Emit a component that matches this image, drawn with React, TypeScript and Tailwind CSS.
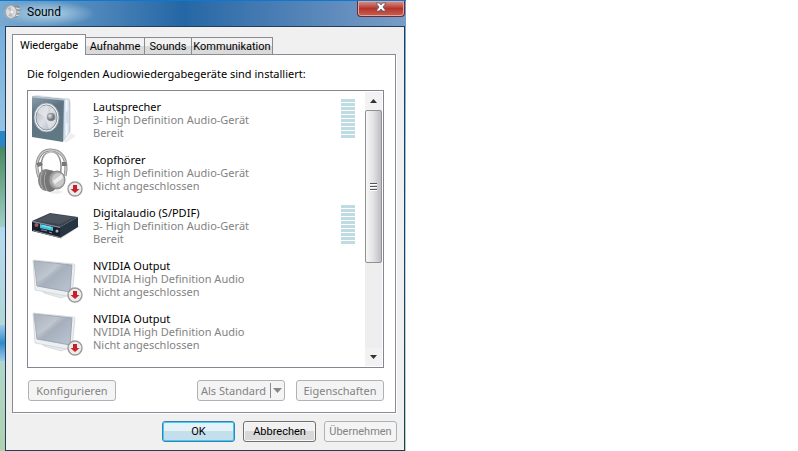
import { useState } from 'react';
import clsx from 'clsx';

type Device = {
  id: number;
  name: string;
  driver: string;
  connected: boolean;
  icon: 'speaker' | 'headphones' | 'receiver' | 'monitor';
};

const devices: Device[] = [
  { id: 1, name: 'Lautsprecher', driver: '3- High Definition Audio-Gerät', connected: true, icon: 'speaker' },
  { id: 2, name: 'Kopfhörer', driver: '3- High Definition Audio-Gerät', connected: false, icon: 'headphones' },
  { id: 3, name: 'Digitalaudio (S/PDIF)', driver: '3- High Definition Audio-Gerät', connected: true, icon: 'receiver' },
  { id: 4, name: 'NVIDIA Output', driver: 'NVIDIA High Definition Audio', connected: false, icon: 'monitor' },
  { id: 5, name: 'NVIDIA Output', driver: 'NVIDIA High Definition Audio', connected: false, icon: 'monitor' },
];

const tabs = [
  { label: 'Wiedergabe', width: 'w-[74px]' },
  { label: 'Aufnahme', width: 'w-[60px]' },
  { label: 'Sounds', width: 'w-[48px]' },
  { label: 'Kommunikation', width: 'w-[82px]' },
];

function Gradients() {
  return (
    <svg className="absolute size-0" aria-hidden="true">
      <defs>
        <linearGradient id="front" x1="0" y1="0" x2="0.3" y2="1">
          <stop offset="0" stopColor="#8fa0ae" />
          <stop offset="0.4" stopColor="#5e7382" />
          <stop offset="1" stopColor="#607784" />
        </linearGradient>
        <linearGradient id="side" x1="0" y1="0" x2="1" y2="0">
          <stop offset="0" stopColor="#b4c6d8" />
          <stop offset="0.5" stopColor="#f1f6fa" />
          <stop offset="1" stopColor="#c6d2de" />
        </linearGradient>
        <linearGradient id="cone" x1="0" y1="0" x2="1" y2="1">
          <stop offset="0" stopColor="#a9b0b8" />
          <stop offset="0.5" stopColor="#dde0e5" />
          <stop offset="1" stopColor="#a8adb5" />
        </linearGradient>
        <radialGradient id="dome" cx="0.35" cy="0.35">
          <stop offset="0" stopColor="#e3e6ea" />
          <stop offset="1" stopColor="#70767e" />
        </radialGradient>
        <linearGradient id="band" x1="0" y1="0" x2="1" y2="0">
          <stop offset="0" stopColor="#8f8f8f" />
          <stop offset="0.5" stopColor="#c3c3c3" />
          <stop offset="1" stopColor="#858585" />
        </linearGradient>
        <linearGradient id="screen" x1="0" y1="0" x2="1" y2="1">
          <stop offset="0" stopColor="#9ba4af" />
          <stop offset="0.4" stopColor="#b8bfc9" />
          <stop offset="0.5" stopColor="#a6afbc" />
          <stop offset="1" stopColor="#bcc6d2" />
        </linearGradient>
      </defs>
    </svg>
  );
}

function SpeakerIcon() {
  return (
    <svg viewBox="0 0 48 50" className="h-[50px] w-12">
      <path d="M31 47 39 38 44 41 35 47z" fill="#eeeeee" />
      <path d="M0 1 5 0 37 4 32 5z" fill="#dce4ea" />
      <path d="M32 4 37 4 38 7 38 37 31 46z" fill="url(#side)" stroke="#a9b9c9" strokeWidth="0.6" />
      <path d="M34 17q3-3 3 3v5q-1 5-3 3z" fill="#d5dfe9" />
      <path d="M0 1 32 4 31 47 0 42z" fill="url(#front)" />
      <path d="M0 1 32 4 32 5.500 0 2.500z" fill="#b7c3cd" />
      <ellipse cx="14.500" cy="22.500" rx="12.500" ry="14.500" fill="#eff1f3" stroke="#8b98a3" strokeWidth="0.8" />
      <ellipse cx="14.500" cy="22.500" rx="10.500" ry="12.500" fill="url(#cone)" stroke="#9096a0" />
      <path d="M14 23 5 17Q9 9 17 11zM14 24 17 34Q23 31 24 25z" fill="#eceef1" opacity="0.6" />
      <circle cx="19" cy="22" r="4" fill="url(#dome)" stroke="#8e959d" strokeWidth="0.500" />
    </svg>
  );
}

function HeadphonesIcon() {
  return (
    <svg viewBox="0 0 48 50" className="h-[50px] w-12">
      <path d="M7 29C1 13 9 2 18 2 28 2 37 9 33 28" fill="none" stroke="#858585" strokeWidth="3" />
      <path d="M7 29C1 13 9 2 18 2 28 2 37 9 33 28" fill="none" stroke="#c9c9c9" strokeWidth="1.500" />
      <path d="M11 27C7 12 11 4 20 4 27 4 31 14 28 28" fill="none" stroke="url(#band)" strokeWidth="1.500" />
      <path d="M4 15 9 14 11 17 6 19zM30 14 34 14 35 18 30 18z" fill="#777" />
      <ellipse cx="14" cy="32" rx="8" ry="11" fill="#858585" />
      <ellipse cx="18" cy="33" rx="8" ry="11" fill="#767676" />
      <path d="M10 24Q6 33 11 41M14 24Q10 33 15 43" fill="none" stroke="#a9a9a9" />
      <ellipse cx="25" cy="32" rx="8" ry="9" fill="#a4a4a4" stroke="#858585" />
      <ellipse cx="26" cy="32" rx="6" ry="7" fill="#c9c9c9" />
      <path d="M21 33 30 26 31 30 23 36z" fill="#eee" />
      <path d="M17 45 26 42 32 44 25 46z" fill="#ededed" />
    </svg>
  );
}

function ReceiverIcon() {
  return (
    <svg viewBox="0 0 48 50" className="h-[50px] w-12">
      <path d="M27 37 45 24 48 25 29 38z" fill="#dfe1e3" />
      <path d="M0 20 18 12 46 16 28 26z" fill="#3c444f" />
      <path d="M4 20 18 13 42 16 28 23z" fill="#59636f" opacity="0.5" />
      <path d="M0 20 28 26 28 37 0 30z" fill="#19202b" />
      <path d="M28 26 46 16 46 26 28 37z" fill="#273442" />
      <path d="M0 20 28 26 28 27 0 21z" fill="#8c98a5" />
      <path d="M8 23 21 26 21 30 8 27z" fill="#43c4dc" />
      <path d="M10 24 19 26 19 27 10 25z" fill="#8ee9f3" />
      <path d="M1 29 28 36 28 37 1 30z" fill="#8794a0" />
      <circle cx="4.500" cy="24" r="2" fill="#ab545f" />
      <circle cx="25" cy="30" r="1.500" fill="#a8b2bb" />
      <path d="M9 29h2l4 1M17 31l3 1" stroke="#89949f" fill="none" />
    </svg>
  );
}

function MonitorIcon() {
  return (
    <svg viewBox="0 0 48 50" className="h-[50px] w-12">
      <path d="M9 36 30 38 37 41 29 44 12 39z" fill="#e7eaed" stroke="#c3c9ce" strokeWidth="0.500" />
      <path d="M1 6 42 10 43 11 40 43 3 36z" fill="#edf0f2" stroke="#c4c9cd" strokeWidth="0.600" />
      <path d="M2 7 40 11 38 38 5 32z" fill="url(#screen)" stroke="#929ca8" strokeWidth="0.800" />
      <path d="M2 7 27 10Q17 23 4 28z" fill="#e0e4e9" opacity="0.2" />
    </svg>
  );
}

const icons = {
  speaker: SpeakerIcon,
  headphones: HeadphonesIcon,
  receiver: ReceiverIcon,
  monitor: MonitorIcon,
};

function UnpluggedBadge() {
  return (
    <svg viewBox="0 0 16 16" className="absolute right-0 bottom-0.5 size-4">
      <circle cx="8" cy="8" r="7" fill="#ececec" stroke="#9b9b9b" strokeWidth="1.400" />
      <path d="M6 4h4v4h2.500L8 12 3.500 8H6z" fill="#c8202b" />
    </svg>
  );
}

function LevelMeter() {
  return (
    <div className="mt-1 flex w-3.5 flex-col gap-px">
      {Array.from({ length: 10 }, (_, i) => (
        <span key={i} className="h-[3px] bg-[#bfdce2]" />
      ))}
    </div>
  );
}

function DeviceRow({ device }: { device: Device }) {
  const Icon = icons[device.icon];
  return (
    <li className="flex h-[53px] pr-[10px] pl-1">
      <div className="relative mr-[10px] h-[51px] w-[51px] shrink-0">
        <Icon />
        {!device.connected && <UnpluggedBadge />}
      </div>
      <div className="min-w-0 flex-1 pt-[5px] leading-[13px]">
        <p className="text-black">{device.name}</p>
        <p className="text-[#838383]">{device.driver}</p>
        <p className="text-[#838383]">{device.connected ? 'Bereit' : 'Nicht angeschlossen'}</p>
      </div>
      {device.connected && <LevelMeter />}
    </li>
  );
}

function Scrollbar() {
  return (
    <div className="flex w-[17px] flex-col bg-[#eeeeee]" aria-hidden="true">
      <div className="flex h-[18px] items-center justify-center bg-[#f2f2f2]">
        <svg viewBox="0 0 7 4" className="h-1 w-[7px]"><path d="M0 4 3.500 0 7 4z" fill="#333" /></svg>
      </div>
      <div className="flex h-[153px] items-center justify-center rounded-xs border border-[#929292] bg-linear-to-r from-[#f7f7f7] via-[#e2e2e4] to-[#bdbdc4]">
        <div className="flex w-[7px] flex-col gap-px">
          <span className="h-0.5 border-b border-white bg-[#555]" />
          <span className="h-0.5 border-b border-white bg-[#555]" />
          <span className="h-0.5 border-b border-white bg-[#555]" />
        </div>
      </div>
      <div className="flex-1" />
      <div className="flex h-[18px] items-center justify-center bg-[#f2f2f2]">
        <svg viewBox="0 0 7 4" className="h-1 w-[7px]"><path d="M0 0 3.500 4 7 0z" fill="#333" /></svg>
      </div>
    </div>
  );
}

const disabledButton = 'h-[21px] rounded-[3px] border border-[#adb2b5] bg-[#f4f4f4] text-[#838383]';

export default function App() {
  const [activeTab, setActiveTab] = useState('Wiedergabe');

  return (
    <div className="min-h-screen bg-white font-['Noto_Sans',sans-serif] text-[11px] leading-[13px] text-black">
      <Gradients />
      <div className="w-full max-w-[406px] bg-linear-to-b from-[#6ba2cb] from-0% via-[#b1d6ee] via-60% to-[#aed2ad] pr-px pb-px">
        {/* Titelleiste */}
        <header className="-mr-px flex h-[26px] items-start border-t border-[#0c78cf] bg-linear-to-r from-[#78a9d0] from-0% via-[#2467a5] via-45% to-[#789dc7]">
          <div className="flex h-full w-24 items-center gap-1.5 bg-radial from-[#b4d3e6] to-transparent to-70% pb-[3px] pl-[5px]">
            <svg viewBox="0 0 16 16" className="size-4">
              <path d="M8 3 13 2 15 6 13 12 8 14z" fill="#9b9b9b" stroke="#777" strokeWidth="0.600" />
              <path d="M11 4 15 5M11 8 15 8M10 12 14 11" stroke="#e6e6e6" />
              <ellipse cx="6" cy="8" rx="5.500" ry="6.500" fill="#ddd" stroke="#aaa" />
              <path d="M6 8 2 4 6 3zM6 8 8 13 3 12z" fill="#bababa" />
              <circle cx="7" cy="8" r="2" fill="#f4f4f4" stroke="#aaa" strokeWidth="0.500" />
            </svg>
            <h1 className="font-['Roboto','Noto_Sans',sans-serif] text-xs">Sound</h1>
          </div>
          <button
            type="button"
            aria-label="Schließen"
            className="mr-px ml-auto flex h-4 w-12 items-center justify-center rounded-b-[4px] border border-t-0 border-[#692c34] bg-linear-to-b from-[#cf9590] from-0% via-[#b6332b] via-50% to-[#c86050] pb-1 shadow-[inset_0_0_0_1px_#dfa6a0]"
          >
            <svg viewBox="0 0 12 10" className="h-2.5 w-3">
              <path d="M1 1H4.500L6 3 7.500 1H11L8 5 11 9H7.500L6 7 4.500 9H1L4 5z" fill="#fff" stroke="#535666" strokeWidth="0.800" />
            </svg>
          </button>
        </header>

        <div className="flex">
          {/* Fensterrand */}
          <div className="w-[5px] shrink-0 bg-linear-to-b from-[#75aedb] via-[#b6d9ef] to-[#aed2ad]">
            <div className="mt-[105px] h-4 bg-[#2b86c5]" />
            <div className="h-20 bg-linear-to-b from-[#49895d] to-[#a0cfc6]" />
            <div className="mt-[98px] h-9 bg-linear-to-b from-[#9acae8] via-[#2d8ac9] to-[#9acae8]" />
          </div>

          <main className="min-w-0 flex-1 border border-[#243d59] bg-[#f0f0f0] pt-[7px] pr-[7px] pb-2 pl-1.5">
            <div role="tablist" className="flex items-end">
              {tabs.map((tab) => (
                <button
                  key={tab.label}
                  type="button"
                  role="tab"
                  aria-selected={activeTab === tab.label}
                  onClick={() => setActiveTab(tab.label)}
                  className={clsx(
                    "-mr-px border border-b-0 border-[#898c95] font-['Roboto','Noto_Sans',sans-serif] whitespace-nowrap",
                    tab.width,
                    activeTab === tab.label
                      ? 'relative -mb-px h-[21px] bg-white'
                      : 'h-[17px] bg-linear-to-b from-[#f2f2f2] from-50% to-[#dadada] to-50%',
                  )}
                >
                  {tab.label}
                </button>
              ))}
            </div>

            <section className="mr-px border border-[#898c95] bg-white pt-3 pr-[11px] pb-[11px] pl-3.5 shadow-[1px_1px_0_#fff]">
              <h2 className="mb-[10px]">Die folgenden Audiowiedergabegeräte sind installiert:</h2>

              <div className="flex h-[278px] border border-[#828790] bg-white py-px pr-px">
                <ul className="min-w-0 flex-1 overflow-hidden pt-[3px]">
                  {devices.map((device) => (
                    <DeviceRow key={device.id} device={device} />
                  ))}
                </ul>
                <Scrollbar />
              </div>

              <div className="mt-3 flex items-center pl-px">
                <button type="button" disabled className={clsx(disabledButton, 'w-[88px]')}>Konfigurieren</button>
                <button type="button" disabled className={clsx(disabledButton, 'mr-[11px] ml-auto flex w-[88px] items-center justify-between pr-0.5 pl-[3px] whitespace-nowrap')}>
                  Als Standard
                  <span className="flex h-[15px] items-center border-l border-[#898989] pl-0.5">
                    <svg viewBox="0 0 9 5" className="h-[5px] w-[9px]"><path d="M0 0h9L4.500 5z" fill="#898989" /></svg>
                  </span>
                </button>
                <button type="button" disabled className={clsx(disabledButton, 'w-[88px]')}>Eigenschaften</button>
              </div>
            </section>

            <footer className="mt-2 flex justify-end gap-2 font-['Roboto','Noto_Sans',sans-serif]">
              <button type="button" className="h-[21px] w-[73px] rounded-[3px] border border-[#3c7fb1] bg-linear-to-b from-[#e5f2f8] from-50% to-[#c3dfeb] to-50% shadow-[inset_0_0_0_1px_#40ccf4]">OK</button>
              <button type="button" className="h-[21px] w-[73px] rounded-[3px] border border-[#707070] bg-linear-to-b from-[#f1f1f1] from-50% to-[#d8d8d8] to-50% shadow-[inset_0_0_0_1px_#f7f7f7]">Abbrechen</button>
              <button type="button" disabled className={clsx(disabledButton, 'w-[73px]')}>Übernehmen</button>
            </footer>
          </main>
        </div>
      </div>
    </div>
  );
}
